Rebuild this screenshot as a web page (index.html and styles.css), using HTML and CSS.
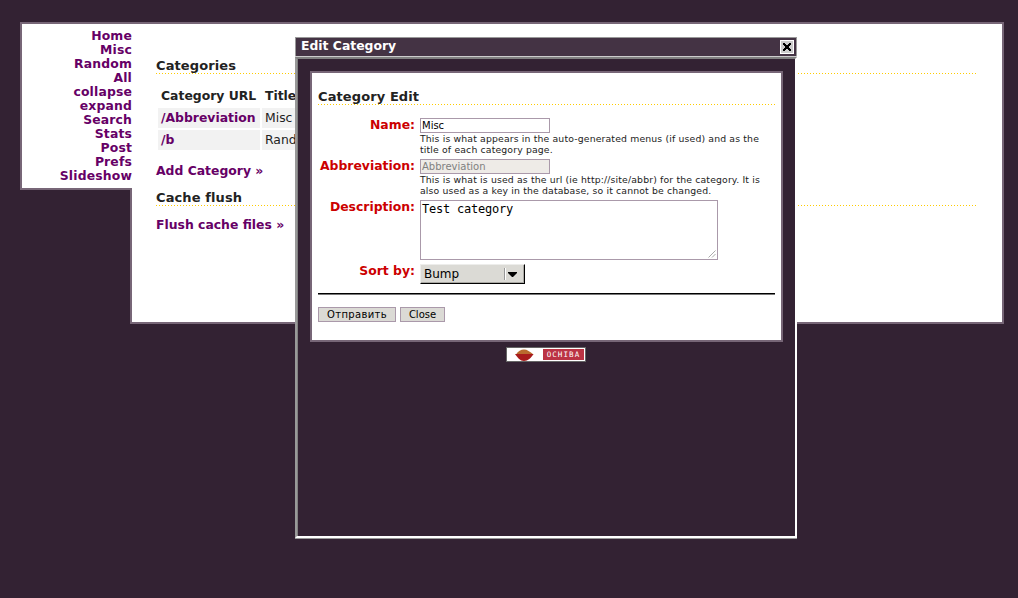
FILE: index.html
```html
<!DOCTYPE html>
<html lang="en">
<head>
<meta charset="utf-8">
<title>Edit Category</title>
<link rel="stylesheet" href="styles.css">
</head>
<body>
<div class="page">
  <nav class="menu">
    <a>Home</a><a>Misc</a><a>Random</a><a>All</a><a>collapse</a><a>expand</a><a>Search</a><a>Stats</a><a>Post</a><a>Prefs</a><a>Slideshow</a>
  </nav>
  <main class="main">
    <h2 class="heading">Categories</h2>
    <table class="cats">
      <tr><th class="url">Category URL</th><th>Title</th></tr>
      <tr><td><a>/Abbreviation</a></td><td>Misc</td></tr>
      <tr><td><a>/b</a></td><td>Random</td></tr>
    </table>
    <a class="action">Add Category »</a>
    <h2 class="heading">Cache flush</h2>
    <a class="action">Flush cache files »</a>
  </main>
</div>

<section class="dialog">
  <header class="titlebar">
    <span class="title">Edit Category</span>
    <span class="close"><svg width="10" height="10" viewBox="0 0 10 10"><path d="M1 1h2v1h1v1h2V2h1V1h2v2H8v1H7v2h1v1h1v2H7V8H6V7H4v1H3v1H1V7h1V6h1V4H2V3H1z" fill="#000"/></svg></span>
  </header>
  <div class="frame">
    <div class="panel">
      <h2 class="heading">Category Edit</h2>
      <div class="row"><label>Name:</label><div class="field"><div class="input">Misc</div><p>This is what appears in the auto-generated menus (if used) and as the<br>title of each category page.</p></div></div>
      <div class="row"><label>Abbreviation:</label><div class="field"><div class="input disabled">Abbreviation</div><p>This is what is used as the url (ie http://site/abbr) for the category. It is<br>also used as a key in the database, so it cannot be changed.</p></div></div>
      <div class="row tall"><label>Description:</label><div class="textarea"><span>Test category</span><svg class="grip" width="8" height="8" viewBox="0 0 8 8"><path d="M0.5 7.5L7.5 0.5M4 7.5L7.5 4" stroke="#aaa" fill="none"/></svg></div></div>
      <div class="row short"><label>Sort by:</label><div class="select"><span>Bump</span><i class="divider"></i><svg width="9" height="5" viewBox="0 0 9 5"><path d="M0 0h9v1L5 5H4L0 1z" fill="#000"/></svg></div></div>
      <div class="rule"></div>
      <div class="buttons"><span class="button submit">Отправить</span><span class="button cancel">Close</span></div>
    </div>
    <div class="badge">
      <svg class="leaf" width="22" height="12" viewBox="0 0 22 12"><path d="M0 5.500h3C5 2 8 .5 11 .5s6 2 9.500 5z" fill="#b96b2e"/><path d="M2 5h18.500C18 9 15 12 11 12S5 9 2 5z" fill="#a81c1c"/></svg>
      <span class="brand">OCHIBA</span>
    </div>
  </div>
</section>
</body>
</html>
```
FILE: styles.css
```css
* { box-sizing: border-box; }
body {
  margin: 0;
  height: 598px;
  overflow: hidden;
  background: #332233;
  color: #222;
  font: 12.4px/14px "DejaVu Sans", sans-serif;
}
.page { display: flex; align-items: flex-start; padding: 22px 14px 0 20px; }
.menu {
  position: relative;
  z-index: 1;
  display: flex;
  flex-direction: column;
  width: 112px;
  height: 168px;
  margin-right: -2px;
  padding-top: 5px;
  border: 2px solid #776677;
  border-right: 0;
  background: #fff;
  text-align: right;
  letter-spacing: 0.15px;
}
a { color: #660066; font-weight: bold; white-space: nowrap; }
.main {
  flex: 1;
  height: 302px;
  padding: 34px 26px 0 24px;
  border: 2px solid #776677;
  background: #fff;
}
.heading {
  height: 16px;
  margin: 0;
  font-size: 13px;
  line-height: 15px;
  letter-spacing: 0.1px;
  background: repeating-linear-gradient(90deg, #fc0 0 1px, transparent 1px 3px) left bottom / 100% 1px no-repeat;
}
.cats { margin: 10px 0 12px; border-spacing: 2px; }
.cats th, .cats td { height: 20px; padding: 3px; text-align: left; }
.cats td { background: #f2f2f2; }
.cats .url { width: 102px; white-space: nowrap; }
.action { display: block; height: 14px; margin-bottom: 12px; }
.heading + .action { margin-top: 12px; }

.dialog {
  position: absolute;
  left: 295px;
  top: 37px;
  width: 502px;
  height: 502px;
}
.titlebar {
  display: flex;
  justify-content: space-between;
  height: 20px;
  padding: 2px 2px 0 5px;
  border: 1px solid #999;
  border-bottom-color: #ccc;
  background: #443344;
  color: #fff;
  font-weight: bold;
}
.title { line-height: 12px; }
.close {
  display: flex;
  align-items: center;
  justify-content: center;
  width: 14px;
  height: 14px;
  border: 1px solid #fff;
  background: #ccc;
}
.frame {
  height: 481px;
  padding: 12px 12px 0;
  border: 2px solid;
  border-color: #808080 #fff #fff #999;
  background: #332233;
  box-shadow: inset 1px 0 #808080, 0 -1px #ccc, 0 1px #999;
}
.panel {
  width: 473px;
  height: 271px;
  margin-left: 1px;
  padding: 16px 6px 0;
  border: 2px solid #776677;
  background: #fff;
}
.panel .heading { margin-bottom: 13px; }
.row { display: flex; gap: 5px; height: 41px; }
.row label { width: 97px; color: #c00; font-weight: bold; text-align: right; white-space: nowrap; }
.row.tall { height: 64px; }
.row.short { height: 29px; }
.input {
  width: 130px;
  height: 15px;
  padding-left: 1px;
  border: 1px solid #aa99aa;
  color: #000;
  font-size: 10px;
  line-height: 14px;
}
.input.disabled { background: #eeebe7; color: #808080; }
.field p { margin: 0; font-size: 9.3px; line-height: 11px; letter-spacing: 0.15px; white-space: nowrap; }
.textarea {
  display: flex;
  justify-content: space-between;
  width: 298px;
  height: 60px;
  padding: 1px;
  border: 1px solid #aa99aa;
  color: #000;
  font: 12px/15px "DejaVu Sans Mono", monospace;
  letter-spacing: -0.22px;
}
.grip { align-self: flex-end; }
.select {
  display: flex;
  align-items: center;
  width: 105px;
  height: 20px;
  padding: 0 7px 0 3px;
  border: 1px solid #ededeb;
  border-right-color: #000;
  border-bottom-color: #000;
  background: #dbdad5;
  box-shadow: inset -1px -1px #aaa9a4;
  color: #000;
  font-size: 12px;
}
.divider { width: 2px; height: 12px; margin: 0 2px 0 auto; border-left: 1px solid #999; border-right: 1px solid #fff; }
.rule { height: 2px; border-top: 1px solid #000; background: #777; }
.buttons { display: flex; gap: 4px; margin-top: 12px; }
.button {
  height: 15px;
  border: 1px solid #aa99aa;
  background: #dbdad5;
  color: #000;
  font-size: 10px;
  line-height: 14px;
  text-align: center;
}
.submit { width: 78px; letter-spacing: 0.35px; }
.cancel { width: 45px; }
.badge {
  display: flex;
  align-items: center;
  justify-content: space-between;
  width: 80px;
  height: 15px;
  margin: 5px 0 0 197px;
  padding: 0 0 0 6px;
  border: 1px solid #666;
  background: #fff;
}
.brand {
  width: 42px;
  height: 11px;
  border-right: 1px solid #fff;
  background: #bb3344;
  color: #fff;
  font: 7.500px/11px "DejaVu Sans Mono", monospace;
  letter-spacing: 1.1px;
  text-align: center;
}
```
